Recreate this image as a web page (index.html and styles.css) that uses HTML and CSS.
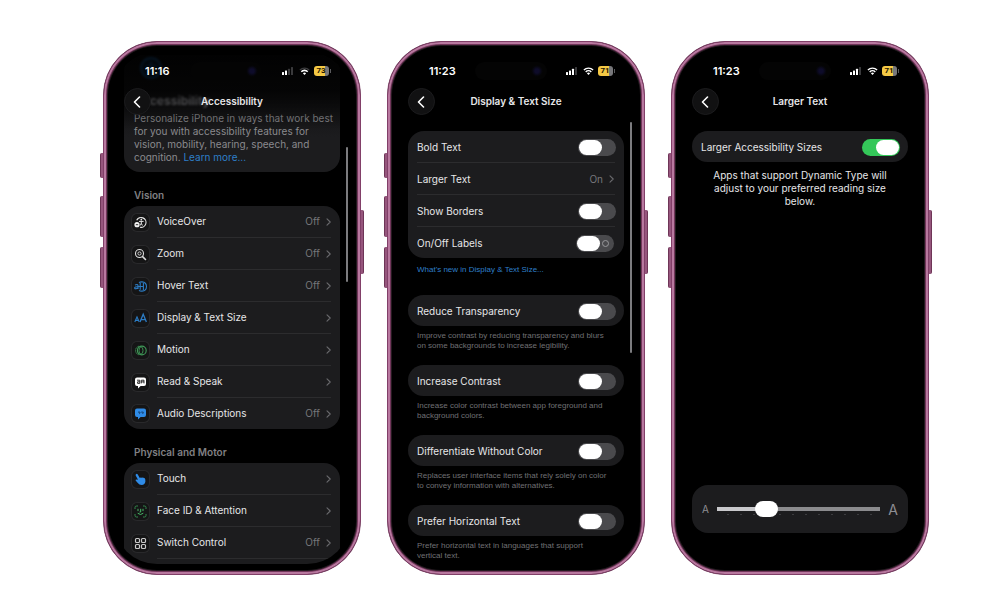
FILE: index.html
```html
<!DOCTYPE html>
<html lang="en">
<head>
    <meta charset="UTF-8">
    <meta name="viewport" content="width=device-width, initial-scale=1.0">
    <title>Larger Text Settings</title>
    <link rel="stylesheet" href="styles.css">
</head>
<body>
    <!-- Shared icons -->
    <svg class="sprite" aria-hidden="true">
        <symbol id="back" viewBox="0 0 8 12"><path d="M6.5 1 L1.5 6 L6.5 11" fill="none" stroke="#fff" stroke-width="1.6" stroke-linecap="round" stroke-linejoin="round"/></symbol>
        <symbol id="chevron" viewBox="0 0 5 8"><path d="M1 .8 L4.2 4 L1 7.2" fill="none" stroke="#6a6a6e" stroke-width="1.1" stroke-linecap="round" stroke-linejoin="round"/></symbol>
        <symbol id="signal" viewBox="0 0 12 8">
            <rect x="0" y="5" width="2" height="3" rx=".5" fill="#fff"/>
            <rect x="3" y="3.5" width="2" height="4.5" rx=".5" fill="#fff"/>
            <rect x="6" y="1.8" width="2" height="6.2" rx=".5" fill="#fff"/>
            <rect x="9" y="0" width="2" height="8" rx=".5" fill="#3a3a3c"/>
        </symbol>
        <symbol id="signal-low" viewBox="0 0 12 8">
            <rect x="0" y="5" width="2" height="3" rx=".5" fill="#fff"/>
            <rect x="3" y="3.5" width="2" height="4.5" rx=".5" fill="#fff"/>
            <rect x="6" y="1.8" width="2" height="6.2" rx=".5" fill="#3a3a3c"/>
            <rect x="9" y="0" width="2" height="8" rx=".5" fill="#3a3a3c"/>
        </symbol>
        <symbol id="wifi" viewBox="0 0 11 8">
            <path d="M.9 3 A6.6 6.6 0 0 1 10.1 3" fill="none" stroke="#fff" stroke-width="1.4"/>
            <path d="M2.7 4.9 A4 4 0 0 1 8.3 4.9" fill="none" stroke="#fff" stroke-width="1.4"/>
            <path d="M5.5 8 L3.9 6.3 A2.3 2.3 0 0 1 7.1 6.3 Z" fill="#fff"/>
        </symbol>
        <symbol id="wifi-low" viewBox="0 0 11 8">
            <path d="M.9 3 A6.6 6.6 0 0 1 10.1 3" fill="none" stroke="#3a3a3c" stroke-width="1.4"/>
            <path d="M2.3 4.7 A4.5 4.5 0 0 1 8.7 4.7" fill="none" stroke="#fff" stroke-width="1.6"/>
            <path d="M5.5 8 L3.9 6.3 A2.3 2.3 0 0 1 7.1 6.3 Z" fill="#fff"/>
        </symbol>
    </svg>

    <main class="phones">
        <!-- Accessibility -->
        <section class="phone">
            <span class="side-btn action"></span>
            <span class="side-btn vol-up"></span>
            <span class="side-btn vol-down"></span>
            <span class="side-btn power"></span>
            <div class="screen">
                <header class="top-bar fade">
                    <div class="status">
                        <span class="time">11:16</span>
                        <span class="island"></span>
                        <svg class="signal"><use href="#signal-low"/></svg>
                        <svg class="wifi"><use href="#wifi-low"/></svg>
                        <span class="battery">73</span>
                    </div>
                    <div class="nav">
                        <button class="back-btn" aria-label="Back"><svg><use href="#back"/></svg></button>
                        <h1>Accessibility</h1>
                    </div>
                </header>
                <div class="content scrolled">
                    <div class="card intro">
                        <svg class="intro-icon" viewBox="0 0 26 26">
                            <circle cx="13" cy="13" r="10" fill="#04182b" stroke="#0f3f6c" stroke-width="2"/>
                            <circle cx="13" cy="8.5" r="1.5" fill="#0f3f6c"/>
                            <path d="M7.5 11 H18.5 M13 11 V14 M13 14 L10.5 19 M13 14 L15.5 19" stroke="#0f3f6c" stroke-width="1.6" fill="none"/>
                        </svg>
                        <div class="intro-title">Accessibility</div>
                        <p>Personalize iPhone in ways that work best for you with accessibility features for vision, mobility, hearing, speech, and cognition. <a href="#">Learn more...</a></p>
                    </div>

                    <h2>Vision</h2>
                    <div class="card">
                        <a class="row" href="#">
                            <svg class="icon" viewBox="0 0 17 17">
                                <path d="M4.7 6.3 A4.9 4.9 0 1 1 8 13.2" fill="none" stroke="#e6e6e6" stroke-width="1.1"/>
                                <circle cx="9.3" cy="5.7" r=".9" fill="#e6e6e6"/>
                                <path d="M7 7.4 H11.6 M9.3 7.4 V9.5 M9.3 9.3 L8.2 11.5 M9.3 9.3 L10.4 11.5" stroke="#e6e6e6" stroke-width="1" fill="none"/>
                                <circle cx="5" cy="10.7" r="2.6" fill="#f2f2f2"/>
                                <path d="M3.8 10.7 H6.2" stroke="#1a1a1a" stroke-width=".9"/>
                            </svg>
                            <span class="row-body"><span class="label">VoiceOver</span><span class="value">Off</span><svg class="chevron"><use href="#chevron"/></svg></span>
                        </a>
                        <a class="row" href="#">
                            <svg class="icon" viewBox="0 0 17 17">
                                <circle cx="7.5" cy="7.5" r="4" fill="none" stroke="#dcdcdc" stroke-width="1.1"/>
                                <circle cx="7.5" cy="7.5" r="1.6" fill="none" stroke="#dcdcdc" stroke-width=".9"/>
                                <path d="M10.6 10.6 L13.5 13.5" stroke="#dcdcdc" stroke-width="1.6" stroke-linecap="round"/>
                            </svg>
                            <span class="row-body"><span class="label">Zoom</span><span class="value">Off</span><svg class="chevron"><use href="#chevron"/></svg></span>
                        </a>
                        <a class="row" href="#">
                            <svg class="icon" viewBox="0 0 17 17">
                                <path d="M7 4.7 Q8 3.8 10 3.9 Q14.4 4.2 14.5 8.5 Q14.4 12.8 10 13.1 Q8 13.2 7 12.3" fill="none" stroke="#2c7cc4" stroke-width="1.1"/>
                                <path d="M3 7 Q5.8 5.8 6 7.6 V11 M6 8.7 Q2.5 8.5 2.6 10 Q3.1 11.6 6 10.1" fill="none" stroke="#2c7cc4" stroke-width="1.1"/>
                                <path d="M8.2 5 V11.8 M11.4 5 V12 M6 8.5 H11.4" fill="none" stroke="#2c7cc4" stroke-width="1.1"/>
                            </svg>
                            <span class="row-body"><span class="label">Hover Text</span><span class="value">Off</span><svg class="chevron"><use href="#chevron"/></svg></span>
                        </a>
                        <a class="row" href="#">
                            <svg class="icon" viewBox="0 0 17 17">
                                <path d="M2.8 12 L5 6.8 L7.2 12 M3.5 10.4 H6.5" fill="none" stroke="#2c7cc4" stroke-width="1.1"/>
                                <path d="M8 12 L11.2 4.2 L14.4 12 M9 9.7 H13.4" fill="none" stroke="#2c7cc4" stroke-width="1.3"/>
                            </svg>
                            <span class="row-body"><span class="label">Display &amp; Text Size</span><svg class="chevron"><use href="#chevron"/></svg></span>
                        </a>
                        <a class="row" href="#">
                            <svg class="icon" viewBox="0 0 17 17">
                                <circle cx="9.8" cy="8.5" r="4.4" fill="none" stroke="#3f9a58" stroke-width="1.1"/>
                                <path d="M7 4.2 A4.4 4.4 0 0 0 7 12.8" fill="none" stroke="#3f9a58" stroke-width="1" stroke-dasharray="1.2 .5"/>
                                <ellipse cx="9" cy="8.5" rx="2" ry="3.6" fill="none" stroke="#3f9a58" stroke-width=".9"/>
                            </svg>
                            <span class="row-body"><span class="label">Motion</span><svg class="chevron"><use href="#chevron"/></svg></span>
                        </a>
                        <a class="row" href="#">
                            <svg class="icon" viewBox="0 0 17 17">
                                <path d="M5 3.5 H12 Q14 3.5 14 5.5 V10 Q14 12 12 12 H8.6 L6 14.4 V12 H5 Q3 12 3 10 V5.5 Q3 3.5 5 3.5 Z" fill="#fff"/>
                                <path d="M5 6.2 H7.8 V9.4 H5.6 V7.8 H7.8 M9.3 9.4 V6.2 H12 V9.4 M9.3 7.9 H12" stroke="#1b1b1b" stroke-width=".9" fill="none"/>
                            </svg>
                            <span class="row-body"><span class="label">Read &amp; Speak</span><svg class="chevron"><use href="#chevron"/></svg></span>
                        </a>
                        <a class="row" href="#">
                            <svg class="icon" viewBox="0 0 17 17">
                                <path d="M5 3.5 H12 Q14 3.5 14 5.5 V10 Q14 12 12 12 H8.6 L6 14.4 V12 H5 Q3 12 3 10 V5.5 Q3 3.5 5 3.5 Z" fill="#2f8be6"/>
                                <path d="M6 7.1 h2 v1 l-.8 .8 M9.2 7.1 h2 v1 l-.8 .8" stroke="#123f70" stroke-width="1" fill="none"/>
                            </svg>
                            <span class="row-body"><span class="label">Audio Descriptions</span><span class="value">Off</span><svg class="chevron"><use href="#chevron"/></svg></span>
                        </a>
                    </div>

                    <h2>Physical and Motor</h2>
                    <div class="card">
                        <a class="row" href="#">
                            <svg class="icon" viewBox="0 0 17 17">
                                <path d="M4 3.2 Q4.9 2.4 5.6 3.3 L7.8 7 Q8.6 6.1 9.4 6.8 Q10.3 6 11 6.8 Q13 6.4 13.3 8.4 L13.4 10.5 Q12.9 13.8 9.7 13.9 Q7.2 13.9 5.8 12 L3.6 9.5 Q3.4 8.3 4.8 8.4 L6 8.8 L3.7 4.5 Q3.4 3.8 4 3.2 Z" fill="#2f8be6"/>
                            </svg>
                            <span class="row-body"><span class="label">Touch</span><svg class="chevron"><use href="#chevron"/></svg></span>
                        </a>
                        <a class="row" href="#">
                            <svg class="icon" viewBox="0 0 17 17">
                                <path d="M3 6 V4.5 Q3 3 4.5 3 H6 M11 3 H12.5 Q14 3 14 4.5 V6 M14 11 V12.5 Q14 14 12.5 14 H11 M6 14 H4.5 Q3 14 3 12.5 V11" fill="none" stroke="#348a4e" stroke-width="1"/>
                                <path d="M6 6.2 V7.7 M11 6.2 V7.7 M8.7 6.2 V9 H7.9 M6 10.5 Q8.5 12.8 11 10.5" fill="none" stroke="#48b868" stroke-width="1" stroke-linecap="round"/>
                            </svg>
                            <span class="row-body"><span class="label">Face ID &amp; Attention</span><svg class="chevron"><use href="#chevron"/></svg></span>
                        </a>
                        <a class="row" href="#">
                            <svg class="icon" viewBox="0 0 17 17">
                                <g fill="none" stroke="#c9c9c9" stroke-width="1.2">
                                    <rect x="3.5" y="3.5" width="4" height="4" rx="1"/>
                                    <rect x="9.5" y="3.5" width="4" height="4" rx="1"/>
                                    <rect x="3.5" y="9.5" width="4" height="4" rx="1"/>
                                    <rect x="9.5" y="9.5" width="4" height="4" rx="1"/>
                                </g>
                            </svg>
                            <span class="row-body"><span class="label">Switch Control</span><span class="value">Off</span><svg class="chevron"><use href="#chevron"/></svg></span>
                        </a>
                        <div class="row"></div>
                    </div>
                </div>
                <span class="scrollbar scrollbar-main"></span>
            </div>
        </section>

        <!-- Display & Text Size -->
        <section class="phone">
            <span class="side-btn action"></span>
            <span class="side-btn vol-up"></span>
            <span class="side-btn vol-down"></span>
            <span class="side-btn power"></span>
            <div class="screen">
                <header class="top-bar">
                    <div class="status">
                        <span class="time">11:23</span>
                        <span class="island"></span>
                        <svg class="signal"><use href="#signal"/></svg>
                        <svg class="wifi"><use href="#wifi"/></svg>
                        <span class="battery">71</span>
                    </div>
                    <div class="nav">
                        <button class="back-btn" aria-label="Back"><svg><use href="#back"/></svg></button>
                        <h1>Display &amp; Text Size</h1>
                    </div>
                </header>
                <div class="content">
                    <div class="card plain">
                        <div class="row"><span class="row-body"><label class="label" for="boldText">Bold Text</label><input type="checkbox" class="toggle" id="boldText"></span></div>
                        <a class="row" href="#"><span class="row-body"><span class="label">Larger Text</span><span class="value">On</span><svg class="chevron"><use href="#chevron"/></svg></span></a>
                        <div class="row"><span class="row-body"><label class="label" for="showBorders">Show Borders</label><input type="checkbox" class="toggle" id="showBorders"></span></div>
                        <div class="row"><span class="row-body"><label class="label" for="onOffLabels">On/Off Labels</label><input type="checkbox" class="toggle labelled" id="onOffLabels"></span></div>
                    </div>
                    <a class="whats-new" href="#">What's new in Display &amp; Text Size...</a>

                    <div class="card plain">
                        <div class="row"><span class="row-body"><label class="label" for="reduceTransparency">Reduce Transparency</label><input type="checkbox" class="toggle" id="reduceTransparency"></span></div>
                    </div>
                    <p class="caption">Improve contrast by reducing transparency and blurs on some backgrounds to increase legibility.</p>

                    <div class="card plain">
                        <div class="row"><span class="row-body"><label class="label" for="increaseContrast">Increase Contrast</label><input type="checkbox" class="toggle" id="increaseContrast"></span></div>
                    </div>
                    <p class="caption">Increase color contrast between app foreground and background colors.</p>

                    <div class="card plain">
                        <div class="row"><span class="row-body"><label class="label" for="withoutColor">Differentiate Without Color</label><input type="checkbox" class="toggle" id="withoutColor"></span></div>
                    </div>
                    <p class="caption">Replaces user interface items that rely solely on color to convey information with alternatives.</p>

                    <div class="card plain">
                        <div class="row"><span class="row-body"><label class="label" for="horizontalText">Prefer Horizontal Text</label><input type="checkbox" class="toggle" id="horizontalText"></span></div>
                    </div>
                    <p class="caption">Prefer horizontal text in languages that support vertical text.</p>
                </div>
                <span class="scrollbar scrollbar-display"></span>
            </div>
        </section>

        <!-- Larger Text -->
        <section class="phone">
            <span class="side-btn action"></span>
            <span class="side-btn vol-up"></span>
            <span class="side-btn vol-down"></span>
            <span class="side-btn power"></span>
            <div class="screen">
                <header class="top-bar">
                    <div class="status">
                        <span class="time">11:23</span>
                        <span class="island"></span>
                        <svg class="signal"><use href="#signal"/></svg>
                        <svg class="wifi"><use href="#wifi"/></svg>
                        <span class="battery">71</span>
                    </div>
                    <div class="nav">
                        <button class="back-btn" aria-label="Back"><svg><use href="#back"/></svg></button>
                        <h1>Larger Text</h1>
                    </div>
                </header>
                <div class="content">
                    <div class="card plain">
                        <div class="row"><span class="row-body"><label class="label" for="largerSizes">Larger Accessibility Sizes</label><input type="checkbox" class="toggle" id="largerSizes" checked></span></div>
                    </div>
                    <p class="sample">Apps that support Dynamic Type will adjust to your preferred reading size below.</p>
                    <div class="card size-card">
                        <span class="small-a">A</span>
                        <div class="slider">
                            <input type="range" min="0" max="11" step="1" value="3" aria-label="Text size">
                        </div>
                        <span class="big-a">A</span>
                    </div>
                </div>
            </div>
        </section>
    </main>
</body>
</html>
```
FILE: styles.css
```css
/* General Styles */
*,
*::before,
*::after {
    box-sizing: border-box;
}

body {
    margin: 0;
    font-family: Inter, "Liberation Sans", sans-serif;
    font-size: 10px;
    line-height: 13px;
    color: #e6e6e8;
    background: #fff;
}

h1, h2, p {
    margin: 0;
}

a {
    color: inherit;
    text-decoration: none;
}

.sprite {
    display: none;
}

/* Phones */
.phones {
    display: grid;
    grid-template-columns: repeat(3, 1fr);
    gap: 26px;
    padding: 41px 71px 25px 103px;
}

.phone {
    position: relative;
    display: flex;
    aspect-ratio: 258 / 534;
    padding: 10px;
    background: #000;
    border: 1px solid #813f68;
    border-radius: 54px;
    box-shadow: inset 0 0 0 2px #b8789f, inset 0 0 0 3px #71365a, inset 0 0 0 4px #241a20;
}

.side-btn {
    position: absolute;
    left: -4px;
    width: 3px;
    background: #96567d;
    border-left: 1px solid #6e3557;
    border-radius: 2px 0 0 2px;
}

.action {
    top: 111px;
    height: 25px;
}

.vol-up {
    top: 154px;
    height: 41px;
}

.vol-down {
    top: 205px;
    height: 41px;
}

.power {
    left: auto;
    right: -4px;
    top: 168px;
    height: 64px;
    border-left: 0;
    border-right: 1px solid #6e3557;
    border-radius: 0 2px 2px 0;
}

.screen {
    position: relative;
    flex: 1;
    display: flex;
    min-width: 0;
    overflow: hidden;
    border-radius: 43px;
    background: #000;
}

/* Status bar and navigation */
.top-bar {
    position: absolute;
    z-index: 1;
    top: 0;
    left: 0;
    right: 0;
    padding: 10px 10px 14px;
}

.fade {
    background: linear-gradient(rgba(0, 0, 0, 0.7) 50%, rgba(0, 0, 0, 0));
}

.status {
    display: flex;
    align-items: center;
    height: 18px;
    padding: 0 11px 0 21px;
}

.time {
    font-size: 11px;
    font-weight: 600;
    color: #fff;
}

.island {
    width: 72px;
    height: 18px;
    margin: 0 auto;
    border-radius: 9px;
    background: radial-gradient(circle at 62px 9px, #0e0c2a 2px, #050509 5px, transparent 6px), #040404;
}

.signal {
    width: 12px;
    height: 8px;
    margin-right: 5px;
}

.wifi {
    width: 11px;
    height: 8px;
    margin-right: 4px;
}

.battery {
    position: relative;
    width: 15px;
    height: 10px;
    padding-right: 1px;
    border-radius: 3px;
    background: linear-gradient(90deg, #f5c945 72%, #77777a 72%);
    color: #1c1600;
    font-family: Roboto, "Liberation Sans", sans-serif;
    font-size: 8px;
    font-weight: 700;
    line-height: 10px;
    text-align: center;
}

.battery::after {
    content: "";
    position: absolute;
    top: 3px;
    right: -2px;
    width: 1px;
    height: 4px;
    background: #5a5a5d;
}

.nav {
    display: grid;
    grid-template-columns: 27px 1fr 27px;
    align-items: center;
    margin-top: 8px;
}

.back-btn {
    display: flex;
    align-items: center;
    justify-content: center;
    width: 27px;
    height: 27px;
    padding: 0;
    border: 1px solid #1c1c1e;
    border-radius: 50%;
    background: #111112;
}

.back-btn svg {
    width: 8px;
    height: 12px;
    margin-right: 2px;
}

h1,
h2 {
    font-size: 10px;
    font-weight: 600;
}

h1 {
    text-align: center;
}

/* Content */
.content {
    flex: 1;
    display: flex;
    flex-direction: column;
    min-width: 0;
    padding: 79px 10px 0;
}

.scrolled {
    padding-top: 3px;
}

h2 {
    margin: 17px 10px 4px;
    color: #808084;
}

.card {
    flex-shrink: 0;
    border-radius: 16px;
    background: #1c1c1e;
}

.intro {
    padding: 0 4px 8px 10px;
    background: linear-gradient(#060607, #1c1c1e 70%);
    color: #8a8a8e;
}

.intro-icon {
    display: block;
    width: 26px;
    height: 26px;
    margin-left: 4px;
    filter: blur(1px);
}

.intro-title {
    margin: 13px 0 5px;
    font-size: 12px;
    font-weight: 700;
    filter: blur(1px);
}

.intro a,
.whats-new {
    color: #2e7fc9;
}

/* Rows */
.row {
    display: flex;
    align-items: center;
    gap: 8px;
    height: 32px;
    padding-left: 8px;
}

.icon {
    width: 17px;
    height: 17px;
    border-radius: 5px;
    background: #151516;
    box-shadow: 0 0 0 1px #29292b;
}

.row-body {
    flex: 1;
    display: flex;
    align-items: center;
    height: 32px;
    margin-right: 9px;
    border-bottom: 1px solid #2c2c2e;
}

.row:last-child,
.row:last-child .row-body {
    height: 31px;
    border-bottom: 0;
}

.label {
    flex: 1;
}

.value {
    margin-right: 6px;
    color: #77777b;
}

.chevron {
    width: 5px;
    height: 8px;
}

.plain .row {
    padding-left: 9px;
}

.plain .row-body {
    padding-top: 1px;
}

.plain .chevron {
    margin-right: 1px;
}

/* Toggles */
.toggle {
    position: relative;
    width: 38px;
    height: 17px;
    margin: 0 -1px 0 0;
    appearance: none;
    border-radius: 9px;
    background: #4a4a4d;
}

.toggle::before {
    content: "";
    position: absolute;
    top: 1px;
    left: 1px;
    width: 23px;
    height: 15px;
    border-radius: 8px;
    background: #fff;
}

.toggle:checked {
    background: #34c759;
}

.toggle:checked::before {
    left: 14px;
}

.labelled {
    margin-right: 1px;
}

.labelled::after {
    content: "";
    position: absolute;
    top: 5px;
    right: 5px;
    width: 7px;
    height: 7px;
    border: 1px solid #99999c;
    border-radius: 50%;
}

/* Small print */
.whats-new,
.caption {
    font-family: "Liberation Sans", sans-serif;
    font-size: 8px;
    line-height: 10px;
}

.whats-new {
    margin: 7px 9px 20px;
}

.caption {
    margin: 5px 15px 14px 9px;
    color: #707074;
}

/* Larger Text */
.sample {
    margin: 7px 20px 0;
    text-align: center;
}

.size-card {
    display: flex;
    align-items: center;
    gap: 8px;
    height: 48px;
    margin: auto 0 31px;
    padding: 0 10px;
    color: #8e8e93;
}

.big-a {
    font-size: 14px;
}

.slider {
    flex: 1;
    display: flex;
    min-width: 0;
    background: radial-gradient(circle, #3c3c3f 1px, transparent 1px) 4px 12px / 13px 3px repeat-x;
}

.slider input {
    width: 100%;
    height: 16px;
    margin: 0;
    appearance: none;
    background: linear-gradient(90deg, #c9c9cc 30%, #8b8b8e 30%) center / 100% 4px no-repeat;
    border-radius: 2px;
}

.slider input::-webkit-slider-thumb {
    appearance: none;
    width: 23px;
    height: 16px;
    border-radius: 8px;
    background: #fff;
}

/* Scroll indicators */
.scrollbar {
    position: absolute;
    right: 2px;
    width: 2px;
    border-radius: 1px;
    background: #7c7c7f;
}

.scrollbar-main {
    top: 95px;
    height: 135px;
}

.scrollbar-display {
    top: 70px;
    height: 231px;
}
```
